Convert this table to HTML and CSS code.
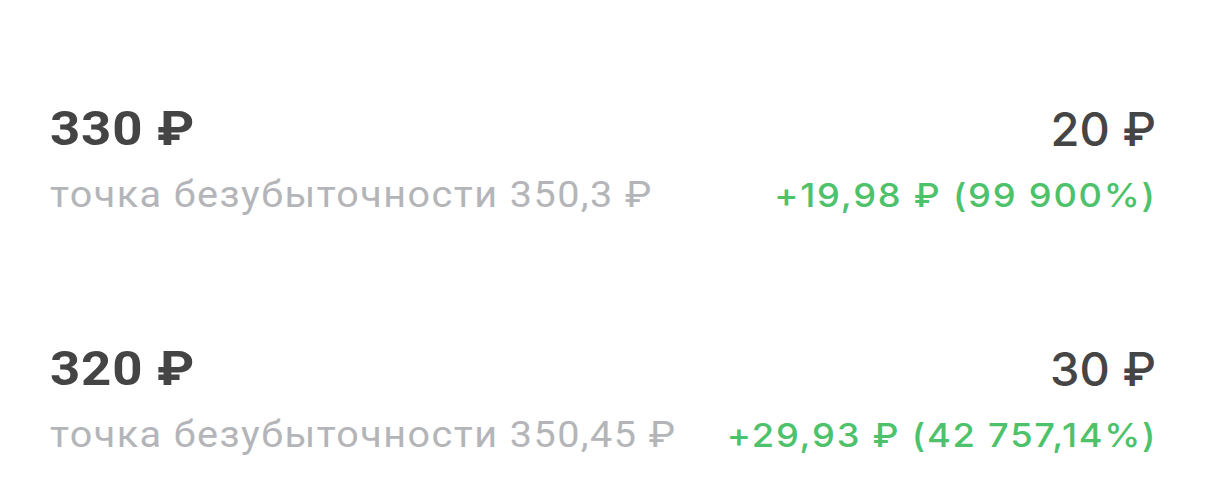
FILE: index.html
```html
<!DOCTYPE html>
<html lang="ru">
<head>
  <meta charset="UTF-8" />
  <meta name="viewport" content="width=device-width, initial-scale=1.0" />
  <title>Позиции</title>
  <link rel="stylesheet" href="styles.css">
</head>
<body>
  <div class="list">
    <div class="row">
      <div class="left">
        <div class="price">330 ₽</div>
        <div class="note">точка безубыточности 350,3 ₽</div>
      </div>
      <div class="right">
        <div class="amount">20 ₽</div>
        <div class="change">+19,98 ₽ (99 900%)</div>
      </div>
    </div>
    <div class="row">
      <div class="left">
        <div class="price">320 ₽</div>
        <div class="note">точка безубыточности 350,45 ₽</div>
      </div>
      <div class="right">
        <div class="amount">30 ₽</div>
        <div class="change">+29,93 ₽ (42 757,14%)</div>
      </div>
    </div>
  </div>
</body>
</html>
```

FILE: styles.css
```css
body {
  margin: 0;
  background-color: #fff;
  font-family: 'Roboto', sans-serif;
}

.list {
  display: flex;
  flex-direction: column;
  gap: 124px;
  padding: 101px 50px 0 50px;
}

.row {
  display: flex;
  justify-content: space-between;
  align-items: flex-start;
}

/* the screenshot text is a little wider than the fonts we have */
.left {
  transform: scaleX(1.1);
  transform-origin: left top;
}

.price {
  font-size: 48px;
  line-height: 56px;
  font-weight: 700;
  letter-spacing: 0.7px;
  color: #444;
}

.note {
  margin-top: 16px;
  font-size: 36px;
  line-height: 44px;
  letter-spacing: 1.3px;
  color: #b4b5b9;
  white-space: nowrap;
}

.right {
  text-align: right;
  font-family: 'Inter', sans-serif;
}

.amount {
  font-size: 47px;
  line-height: 56px;
  font-weight: 500;
  color: #454545;
}

.change {
  margin-top: 16px;
  margin-right: -1px;
  font-size: 33px;
  line-height: 44px;
  font-weight: 500;
  letter-spacing: 1.6px;
  color: #4dc26a;
  transform: scaleX(1.1);
  transform-origin: right top;
  white-space: nowrap;
}
```
